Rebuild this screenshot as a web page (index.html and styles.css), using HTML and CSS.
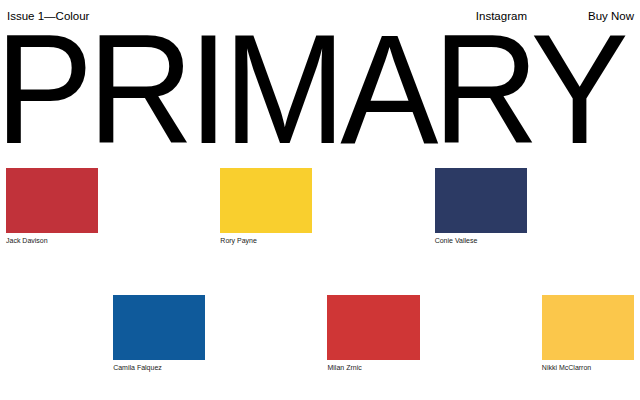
FILE: index.html
```html
<!DOCTYPE html>
<html lang="en">
<head>
<meta charset="utf-8">
<title>Primary — Issue 1</title>
<link rel="stylesheet" href="styles.css">
</head>
<body>
<div class="page">
  <header class="topbar">
    <span class="issue">Issue 1—Colour</span>
    <nav class="nav">
      <a class="nav-link" href="#">Instagram</a>
      <a class="nav-link" href="#">Buy Now</a>
    </nav>
  </header>
  <h1 class="title"><span class="title-text">PRIMARY</span></h1>
  <section class="grid">
    <figure class="item c1"><div class="swatch red1"></div><figcaption class="cap">Jack Davison</figcaption></figure>
    <figure class="item c3"><div class="swatch yellow1"></div><figcaption class="cap">Rory Payne</figcaption></figure>
    <figure class="item c5"><div class="swatch navy"></div><figcaption class="cap">Conie Vallese</figcaption></figure>
    <figure class="item c2"><div class="swatch blue"></div><figcaption class="cap">Camila Falquez</figcaption></figure>
    <figure class="item c4"><div class="swatch red2"></div><figcaption class="cap">Milan Zrnic</figcaption></figure>
    <figure class="item c6"><div class="swatch yellow2"></div><figcaption class="cap">Nikki McClarron</figcaption></figure>
  </section>
</div>
</body>
</html>
```

FILE: styles.css
```css
html, body {
  margin: 0;
  padding: 0;
  background: #fff;
}
body {
  font-family: "Liberation Sans", Arial, sans-serif;
  color: #000;
  overflow: hidden;
}
.page {
  padding: 0 6px;
}
.topbar {
  display: flex;
  justify-content: space-between;
  align-items: baseline;
  padding-top: 10px;
  font-size: 11.5px;
  line-height: 13px;
}
.issue {
  margin-left: 1px;
}
.nav {
  display: flex;
  gap: 61px;
}
.nav-link {
  color: #000;
  text-decoration: none;
}
.title {
  margin: 5px 0 0 -10.6px;
  font-size: 155px;
  font-weight: 400;
  line-height: 0.8;
  white-space: nowrap;
}
.title-text {
  display: inline-block;
  letter-spacing: -0.039em;
  transform: scaleX(0.95);
  transform-origin: left center;
}
.grid {
  display: grid;
  grid-template-columns: repeat(6, 1fr);
  column-gap: 15px;
  row-gap: 50px;
  margin-top: 16px;
}
.item {
  margin: 0;
}
.c1 { grid-column: 1; grid-row: 1; }
.c3 { grid-column: 3; grid-row: 1; }
.c5 { grid-column: 5; grid-row: 1; }
.c2 { grid-column: 2; grid-row: 2; }
.c4 { grid-column: 4; grid-row: 2; }
.c6 { grid-column: 6; grid-row: 2; }
.swatch {
  height: 65px;
}
.red1 { background: #c1323a; }
.yellow1 { background: #f9cf2e; }
.navy { background: #2c3a64; }
.blue { background: #0f5a9b; }
.red2 { background: #cf3636; }
.yellow2 { background: #fbc74b; }
.cap {
  margin-top: 4px;
  font-size: 7px;
  line-height: 8px;
  color: #222;
}
```
